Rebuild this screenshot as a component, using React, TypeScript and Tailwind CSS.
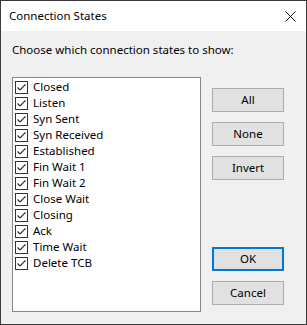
import React from 'react';

const states = [
  'Closed',
  'Listen',
  'Syn Sent',
  'Syn Received',
  'Established',
  'Fin Wait 1',
  'Fin Wait 2',
  'Close Wait',
  'Closing',
  'Ack',
  'Time Wait',
  'Delete TCB',
];

const CheckBox = () => (
  <svg width="13" height="13" viewBox="0 0 13 13" className="shrink-0">
    <rect x="0.5" y="0.5" width="12" height="12" fill="#fff" stroke="#333" />
    <path d="M2.5 6.5 L5 9 L10.5 3.5" fill="none" stroke="#333" strokeWidth="1.2" />
  </svg>
);

const Button = ({ label, primary }: { label: string; primary?: boolean }) => (
  <button
    className={`w-[72px] h-[24px] bg-[#e1e1e1] text-[11.5px] text-black leading-none ${
      primary ? 'border-2 border-[#0078d7]' : 'border border-[#adadad]'
    }`}
  >
    {label}
  </button>
);

export default function App() {
  return (
    <div
      className="w-[307px] h-[325px] border border-[#3a3a3a] flex flex-col bg-[#f0f0f0] text-black"
      style={{ fontFamily: '"Noto Sans", "Open Sans", sans-serif' }}
    >
      {/* Title bar */}
      <div className="h-[30px] bg-white flex items-center justify-between pl-2 pr-[10px]">
        <span className="text-[11.5px]">Connection States</span>
        <svg width="11" height="11" viewBox="0 0 11 11">
          <path d="M0.5 0.5 L10.5 10.5 M10.5 0.5 L0.5 10.5" stroke="#111" strokeWidth="1" />
        </svg>
      </div>

      {/* Body */}
      <div className="flex-1 flex flex-col pl-[11px] pt-[11px]">
        <div className="text-[11.5px] leading-[16px]">Choose which connection states to show:</div>

        <div className="flex mt-[19px]">
          <div className="w-[189px] h-[235px] bg-white border border-[#828790] pt-[1px] pl-[1px]">
            {states.map((s) => (
              <div key={s} className="h-[16px] flex items-center gap-[5px] pl-[1px]">
                <CheckBox />
                <span className="text-[11.5px] leading-none">{s}</span>
              </div>
            ))}
          </div>

          <div className="ml-[11px] pt-[11px] pb-[7px] flex flex-col">
            <div className="flex flex-col gap-[10px]">
              <Button label="All" />
              <Button label="None" />
              <Button label="Invert" />
            </div>
            <div className="mt-auto flex flex-col gap-[10px]">
              <Button label="OK" primary />
              <Button label="Cancel" />
            </div>
          </div>
        </div>
      </div>
    </div>
  );
}
